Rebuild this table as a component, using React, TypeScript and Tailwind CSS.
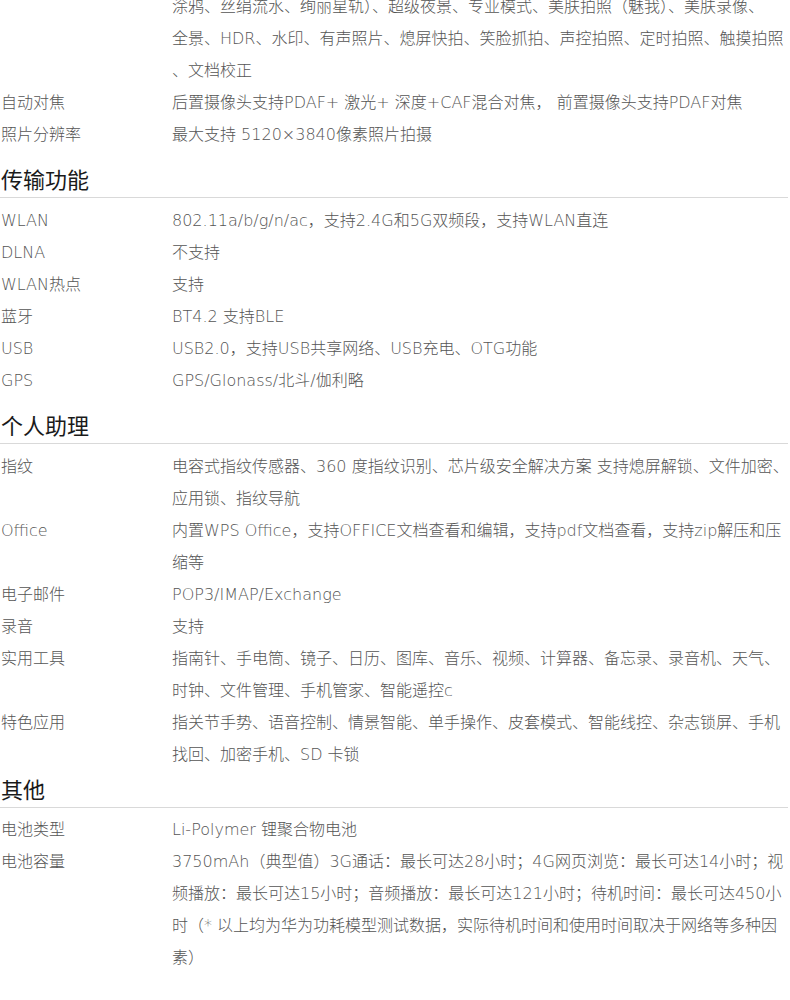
import React from "react";

type Row = { label: string; lines: string[] };

const camera: Row[] = [
  {
    label: "",
    lines: [
      "涂鸦、丝绢流水、绚丽星轨）、超级夜景、专业模式、美肤拍照（魅我）、美肤录像、",
      "全景、HDR、水印、有声照片、熄屏快拍、笑脸抓拍、声控拍照、定时拍照、触摸拍照",
      "、文档校正",
    ],
  },
  { label: "自动对焦", lines: ["后置摄像头支持PDAF+ 激光+ 深度+CAF混合对焦， 前置摄像头支持PDAF对焦"] },
  { label: "照片分辨率", lines: ["最大支持 5120×3840像素照片拍摄"] },
];

const transfer: Row[] = [
  { label: "WLAN", lines: ["802.11a/b/g/n/ac，支持2.4G和5G双频段，支持WLAN直连"] },
  { label: "DLNA", lines: ["不支持"] },
  { label: "WLAN热点", lines: ["支持"] },
  { label: "蓝牙", lines: ["BT4.2 支持BLE"] },
  { label: "USB", lines: ["USB2.0，支持USB共享网络、USB充电、OTG功能"] },
  { label: "GPS", lines: ["GPS/Glonass/北斗/伽利略"] },
];

const assistant: Row[] = [
  {
    label: "指纹",
    lines: [
      "电容式指纹传感器、360 度指纹识别、芯片级安全解决方案 支持熄屏解锁、文件加密、",
      "应用锁、指纹导航",
    ],
  },
  {
    label: "Office",
    lines: ["内置WPS Office，支持OFFICE文档查看和编辑，支持pdf文档查看，支持zip解压和压", "缩等"],
  },
  { label: "电子邮件", lines: ["POP3/IMAP/Exchange"] },
  { label: "录音", lines: ["支持"] },
  {
    label: "实用工具",
    lines: [
      "指南针、手电筒、镜子、日历、图库、音乐、视频、计算器、备忘录、录音机、天气、",
      "时钟、文件管理、手机管家、智能遥控c",
    ],
  },
  {
    label: "特色应用",
    lines: [
      "指关节手势、语音控制、情景智能、单手操作、皮套模式、智能线控、杂志锁屏、手机",
      "找回、加密手机、SD 卡锁",
    ],
  },
];

const other: Row[] = [
  { label: "电池类型", lines: ["Li-Polymer 锂聚合物电池"] },
  {
    label: "电池容量",
    lines: [
      "3750mAh（典型值）3G通话：最长可达28小时；4G网页浏览：最长可达14小时；视",
      "频播放：最长可达15小时；音频播放：最长可达121小时；待机时间：最长可达450小",
      "时（* 以上均为华为功耗模型测试数据，实际待机时间和使用时间取决于网络等多种因",
      "素）",
    ],
  },
];

function SpecTable({ rows }: { rows: Row[] }) {
  return (
    <div className="flex flex-col">
      {rows.map((r, i) => (
        <div key={i} className="grid grid-cols-[172px_620px] leading-[32px]">
          <div className="pl-px">{r.label}</div>
          <div className="whitespace-nowrap">
            {r.lines.map((l, j) => (
              <div key={j}>{l}</div>
            ))}
          </div>
        </div>
      ))}
    </div>
  );
}

function SectionTitle({ title, className }: { title: string; className: string }) {
  return (
    <h2
      className={`${className} pl-px pb-[2px] font-['Noto_Sans_CJK_SC',sans-serif] font-normal text-[22px] leading-[34px] text-[#1a1a1a] border-b border-[#d9d9d9] w-[788px]`}
    >
      {title}
    </h2>
  );
}

export default function App() {
  return (
    <div className="w-[790px] h-[1000px] overflow-hidden bg-white">
      <div className="w-[792px] -mt-[9px] font-['DejaVu_Sans','Noto_Sans_CJK_SC',sans-serif] font-light text-[16px] text-[#555]">
        <SpecTable rows={camera} />

        <SectionTitle title="传输功能" className="mt-[10px] mb-[7px]" />
        <SpecTable rows={transfer} />

        <SectionTitle title="个人助理" className="mt-[10px] mb-[7px]" />
        <SpecTable rows={assistant} />

        <SectionTitle title="其他" className="mt-0 mb-[6px]" />
        <SpecTable rows={other} />
      </div>
    </div>
  );
}
